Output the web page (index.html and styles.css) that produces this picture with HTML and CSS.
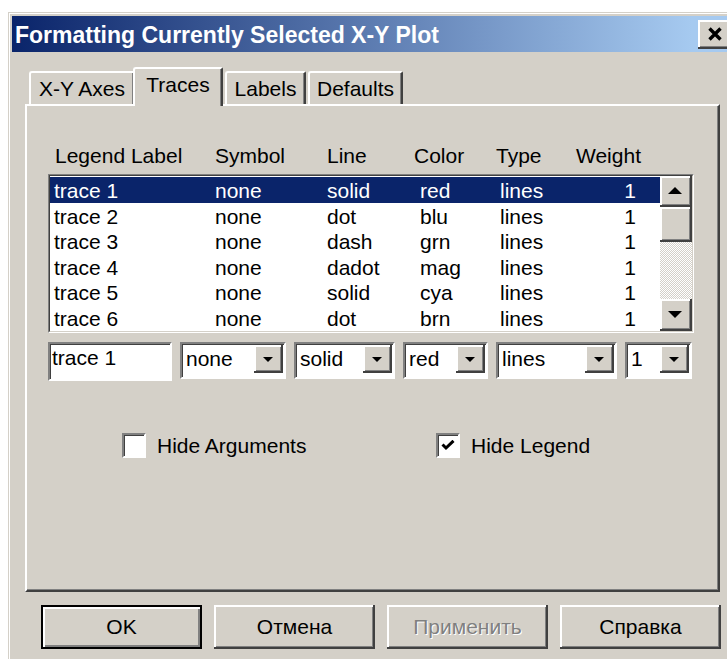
FILE: index.html
```html
<!DOCTYPE html>
<html lang="en">
<head>
<meta charset="utf-8">
<title>Formatting Currently Selected X-Y Plot</title>
<link rel="stylesheet" href="styles.css">
</head>
<body>
<div class="window">
  <div class="titlebar">
    <span class="title">Formatting Currently Selected X-Y Plot</span>
    <span class="close-btn">
      <svg width="14" height="14" viewBox="0 0 14 14"><path d="M1.5 1.5 L12.5 12.5 M12.5 1.5 L1.5 12.5" stroke="#000" stroke-width="3.4" fill="none"/></svg>
    </span>
  </div>

  <div class="client">
    <div class="tabs">
      <div class="tab tab-axes">X-Y Axes</div>
      <div class="tab tab-traces active">Traces</div>
      <div class="tab tab-labels">Labels</div>
      <div class="tab tab-defaults">Defaults</div>
    </div>

    <div class="panel">
      <div class="head">
        <span class="first">Legend Label</span>
        <span>Symbol</span>
        <span>Line</span>
        <span>Color</span>
        <span>Type</span>
        <span>Weight</span>
      </div>

      <div class="listbox">
        <div class="listbox-in">
          <div class="rows">
            <div class="row sel"><span>trace 1</span><span>none</span><span>solid</span><span>red</span><span>lines</span><span class="num">1</span></div>
            <div class="row"><span>trace 2</span><span>none</span><span>dot</span><span>blu</span><span>lines</span><span class="num">1</span></div>
            <div class="row"><span>trace 3</span><span>none</span><span>dash</span><span>grn</span><span>lines</span><span class="num">1</span></div>
            <div class="row"><span>trace 4</span><span>none</span><span>dadot</span><span>mag</span><span>lines</span><span class="num">1</span></div>
            <div class="row"><span>trace 5</span><span>none</span><span>solid</span><span>cya</span><span>lines</span><span class="num">1</span></div>
            <div class="row"><span>trace 6</span><span>none</span><span>dot</span><span>brn</span><span>lines</span><span class="num">1</span></div>
          </div>
          <div class="vscroll">
            <div class="raised sb-up"><i class="tri tri-up"></i></div>
            <div class="raised sb-thumb"></div>
            <div class="sb-track"></div>
            <div class="raised sb-down"><i class="tri tri-down"></i></div>
          </div>
        </div>
      </div>

      <div class="editors">
        <div class="field edit">trace 1</div>
        <div class="field combo w-symbol"><span class="val">none</span><span class="raised drop"><i class="tri tri-small"></i></span></div>
        <div class="field combo w-line"><span class="val">solid</span><span class="raised drop"><i class="tri tri-small"></i></span></div>
        <div class="field combo w-color"><span class="val">red</span><span class="raised drop"><i class="tri tri-small"></i></span></div>
        <div class="field combo w-type"><span class="val">lines</span><span class="raised drop"><i class="tri tri-small"></i></span></div>
        <div class="field combo w-weight"><span class="val">1</span><span class="raised drop"><i class="tri tri-small"></i></span></div>
      </div>

      <div class="checks">
        <label class="check"><span class="box"></span>Hide Arguments</label>
        <label class="check"><span class="box"><svg width="14" height="11" viewBox="0 0 14 11"><path d="M1.5 4.5 L5 8 L12.5 0.8" stroke="#000" stroke-width="3" fill="none"/></svg></span>Hide Legend</label>
      </div>
    </div>

    <div class="buttons">
      <div class="btn default">OK</div>
      <div class="btn">Отмена</div>
      <div class="btn disabled">Применить</div>
      <div class="btn">Справка</div>
    </div>
  </div>
</div>
</body>
</html>
```

FILE: styles.css
```css
* { box-sizing: border-box; }

html, body { margin: 0; }

body {
  width: 727px;
  height: 659px;
  overflow: hidden;
  background: #fff;
  font-family: "Liberation Sans", Arial, sans-serif;
  font-size: 21px;
  color: #000;
}

/* dialog frame */
.window {
  width: 732px;
  height: 660px;
  margin: 12px 0 0 8px;
  padding: 3px 3px 0 3px;
  border: 1px solid #d4d0c8;
  box-shadow: inset 1px 1px 0 #fff;
  background: #d4d0c8;
}

.titlebar {
  height: 36px;
  display: flex;
  align-items: center;
  justify-content: space-between;
  padding: 0 2px 0 3px;
  background: linear-gradient(to right, #0a246a 0, #a6caf0 680px);
}

.title {
  color: #fff;
  font-weight: bold;
  font-size: 23px;
  line-height: 33px;
  padding-top: 3px;
  white-space: nowrap;
}

.close-btn {
  flex: none;
  width: 36px;
  height: 29px;
  display: flex;
  align-items: center;
  padding-left: 10px;
  background: #d4d0c8;
  box-shadow: inset -2px -2px 0 #404040, inset 2px 2px 0 #fff, inset -3px -3px 0 #808080;
}

/* raised 3D face used by scroll/drop buttons */
.raised {
  background: #d4d0c8;
  box-shadow: inset -2px -2px 0 #404040, inset 2px 2px 0 #fff, inset -3px -3px 0 #808080;
}

.client {
  padding: 15px 0 0 13px;
}

/* tab strip */
.tabs {
  display: flex;
  align-items: flex-end;
  height: 37px;
  padding-left: 4px;
}

.tab {
  height: 33px;
  padding-top: 4px;
  line-height: 24px;
  text-align: center;
  border-top: 2px solid #fff;
  border-left: 2px solid #fff;
  border-right: 2px solid #404040;
  border-top-left-radius: 3px;
  border-top-right-radius: 2px;
  box-shadow: inset -1px 0 0 #808080;
  background: #d4d0c8;
}

.tab.active {
  height: 39px;
  margin-bottom: -2px;
  position: relative;
  z-index: 1;
}

.tab-axes { width: 106px; }
.tab-traces { width: 90px; margin-left: -2px; }
.tab-labels { width: 81px; margin-left: 2px; }
.tab-defaults { width: 95px; margin-left: 2px; }

.panel {
  width: 695px;
  height: 488px;
  padding-top: 38px;
  border: 2px solid;
  border-color: #fff #404040 #404040 #fff;
  box-shadow: inset -1px -1px 0 #808080;
}

.head {
  display: grid;
  grid-template-columns: 165px 112px 87px 82px 80px auto;
  margin-left: 23px;
  line-height: 24px;
}

.head .first { padding-left: 5px; }

/* trace list */
.listbox {
  width: 646px;
  height: 159px;
  margin: 6px 0 0 21px;
  border: 1px solid;
  border-color: #808080 #fff #fff #808080;
}

.listbox-in {
  height: 100%;
  display: flex;
  border: 1px solid;
  border-color: #404040 #d4d0c8 #d4d0c8 #404040;
  background: #fff;
}

.rows {
  width: 610px;
  padding-top: 1px;
}

.row {
  display: grid;
  grid-template-columns: 161px 112px 93px 80px 100px 36px;
  height: 25.6px;
  line-height: 27px;
  padding-left: 4px;
  white-space: nowrap;
}

.row.sel {
  background: #0a246a;
  color: #fff;
}

.row .num { text-align: right; }

.vscroll {
  width: 32px;
  display: flex;
  flex-direction: column;
}

.sb-up { height: 31px; }
.sb-thumb { height: 35px; }
.sb-down { height: 32px; }
.sb-track {
  flex: 1;
  background: conic-gradient(#d4d0c8 25%, #fff 0 50%, #d4d0c8 0 75%, #fff 0) 0 0 / 2px 2px;
}

.sb-up, .sb-down {
  display: flex;
  align-items: center;
  justify-content: center;
}

.tri {
  display: block;
  width: 0;
  height: 0;
  border-left: 7px solid transparent;
  border-right: 7px solid transparent;
}

.tri-up { border-bottom: 7px solid #000; margin: -2px 2px 0 0; }
.tri-down { border-top: 7px solid #000; margin: 0 2px 2px 0; }

.tri-small {
  border-left-width: 5px;
  border-right-width: 5px;
  border-top: 5px solid #000;
  margin: 0 2px 0 0;
}

/* editor row under the list */
.editors {
  display: flex;
  align-items: flex-start;
  gap: 8px;
  margin: 9px 0 0 21px;
}

.field {
  height: 37px;
  border: 2px solid;
  border-color: #808080 #fff #fff #808080;
  box-shadow: inset 1px 1px 0 #404040;
  background: #fff;
  line-height: 24px;
  white-space: nowrap;
}

.edit {
  width: 124px;
  height: 39px;
  padding: 2px 0 0 2px;
}

.combo {
  display: flex;
  justify-content: space-between;
  align-items: flex-start;
  padding: 1px;
}

.combo .val {
  padding: 2px 0 0 3px;
}

.drop {
  width: 29px;
  height: 28px;
  display: flex;
  align-items: center;
  justify-content: center;
}

.w-symbol { width: 106px; }
.w-line { width: 101px; }
.w-color { width: 85px; }
.w-type { width: 121px; }
.w-weight { width: 67px; }

/* check boxes */
.checks {
  display: grid;
  grid-template-columns: 314px auto;
  margin: 52px 0 0 95px;
}

.check {
  display: flex;
  align-items: center;
  gap: 11px;
  line-height: 24px;
}

.box {
  width: 24px;
  height: 25px;
  display: flex;
  align-items: center;
  justify-content: center;
  border: 2px solid;
  border-color: #808080 #fff #fff #808080;
  box-shadow: inset 1px 1px 0 #404040;
  background: #fff;
}

/* dialog buttons */
.buttons {
  display: flex;
  gap: 12px;
  margin: 13px 0 0 16px;
}

.btn {
  width: 161px;
  height: 44px;
  display: flex;
  align-items: center;
  justify-content: center;
  padding-bottom: 1px;
  background: #d4d0c8;
  box-shadow: inset -2px -2px 0 #404040, inset 2px 2px 0 #fff, inset -3px -3px 0 #808080;
}

.btn.default {
  border: 2px solid #000;
  box-shadow: inset 2px 2px 0 #fff, inset -2px -2px 0 #808080;
}

.btn.disabled {
  color: #808080;
  text-shadow: 1px 1px 0 #fff;
}
```
